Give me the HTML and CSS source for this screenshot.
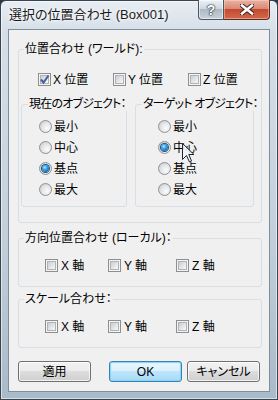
FILE: index.html
```html
<!DOCTYPE html>
<html lang="ja">
  <head>
    <meta charset="UTF-8" />
    <meta name="viewport" content="width=device-width, initial-scale=1.0" />
    <title>選択の位置合わせ</title>
    <link rel="stylesheet" href="styles.css">
  </head>
  <body>
    <div class="window">
      <div class="titlebar">
        <div class="title">選択の位置合わせ (Box001)</div>
        <div class="caption">
          <div class="capBtn help">?</div>
          <div class="capBtn close">
            <svg width="14" height="11" viewBox="0 0 14 11">
              <path d="M2 1.5 L12 9.5 M12 1.5 L2 9.5" stroke="#3a2018" stroke-width="4.5" stroke-linecap="square" fill="none" />
              <path d="M2 1.5 L12 9.5 M12 1.5 L2 9.5" stroke="#ffffff" stroke-width="2.6" stroke-linecap="square" fill="none" />
            </svg>
          </div>
        </div>
      </div>

      <div class="client">
        <fieldset class="group world">
          <legend>位置合わせ (ワールド):</legend>
          <div class="checkRow">
            <label class="check">
              <span class="box checked">
                <svg width="13" height="13" viewBox="0 0 13 13">
                  <path d="M3 6.5 L5.5 9.5 L10.5 2.5" stroke="#4a5f9a" stroke-width="2" fill="none" />
                </svg>
              </span>X 位置
            </label>
            <label class="check"><span class="box"></span>Y 位置</label>
            <label class="check"><span class="box"></span>Z 位置</label>
          </div>
          <div class="objRow">
            <fieldset class="group sub current">
              <legend>現在のオブジェクト：</legend>
              <div class="radios">
                <label class="radio"><span class="dot"></span>最小</label>
                <label class="radio"><span class="dot"></span>中心</label>
                <label class="radio"><span class="dot on"></span>基点</label>
                <label class="radio"><span class="dot"></span>最大</label>
              </div>
            </fieldset>
            <fieldset class="group sub target">
              <legend>ターゲット オブジェクト：</legend>
              <div class="radios">
                <label class="radio"><span class="dot"></span>最小</label>
                <label class="radio"><span class="dot on"></span>中心</label>
                <label class="radio"><span class="dot"></span>基点</label>
                <label class="radio"><span class="dot"></span>最大</label>
              </div>
            </fieldset>
          </div>
        </fieldset>

        <fieldset class="group orient">
          <legend>方向位置合わせ (ローカル)：</legend>
          <div class="axisRow">
            <label class="check"><span class="box"></span>X 軸</label>
            <label class="check"><span class="box"></span>Y 軸</label>
            <label class="check"><span class="box"></span>Z 軸</label>
          </div>
        </fieldset>

        <fieldset class="group scale">
          <legend>スケール合わせ：</legend>
          <div class="axisRow">
            <label class="check"><span class="box"></span>X 軸</label>
            <label class="check"><span class="box"></span>Y 軸</label>
            <label class="check"><span class="box"></span>Z 軸</label>
          </div>
        </fieldset>

        <div class="buttons">
          <div class="btn apply">適用</div>
          <div class="btn ok">OK</div>
          <div class="btn">キャンセル</div>
        </div>
      </div>

      <svg class="cursor" width="13" height="20" viewBox="0 0 13 20">
        <path d="M0.5 0.5 L0.5 16.5 L4.5 12.5 L7.5 19 L9.5 18 L6.8 11.5 L12 11.5 Z" fill="#f4f6f8" fill-opacity="0.85" stroke="#1c2630" stroke-width="1" />
      </svg>
    </div>
  </body>
</html>
```

FILE: styles.css
```css
body {
  margin: 0;
  background: #2c3844;
}
.window {
  position: relative;
  width: 278px;
  height: 400px;
  box-sizing: border-box;
  padding: 0 7px 7px 7px;
  display: flex;
  flex-direction: column;
  border: 1px solid #3a444f;
  border-radius: 6px 6px 0 0;
  background: linear-gradient(#e7edf3 0, #d6dfe8 30px, #c2cfdb 60%, #a9bac8 100%);
  box-shadow: inset 0 0 0 1px rgba(255, 255, 255, 0.55);
}
.titlebar {
  height: 28px;
  display: flex;
  justify-content: space-between;
  align-items: flex-start;
}
.title {
  padding: 6px 0 0 1px;
  font-family: "Liberation Sans", "Noto Sans CJK JP", sans-serif;
  font-feature-settings: "palt";
  font-size: 13px;
  line-height: 16px;
  color: #1a1a1a;
  text-shadow: 0 0 6px #ffffff, 0 0 3px #ffffff;
}
.caption {
  display: flex;
  margin-top: -1px;
}
.capBtn {
  height: 20px;
  box-sizing: border-box;
  display: flex;
  align-items: center;
  justify-content: center;
}
.help {
  width: 26px;
  border: 1px solid #4c5562;
  border-top: none;
  border-radius: 0 0 0 4px;
  background: linear-gradient(#eef2f6 0, #cfd7df 45%, #aeb9c5 50%, #c9d2db 100%);
  box-shadow: inset 0 0 0 1px rgba(255, 255, 255, 0.5);
  font-family: "Liberation Sans", sans-serif;
  font-weight: bold;
  font-size: 14px;
  color: #ffffff;
  text-shadow: 0 0 1px #1e2a36, 0 0 1px #1e2a36, 0 0 2px #1e2a36;
}
.close {
  width: 46px;
  border: 1px solid #5b2a22;
  border-top: none;
  border-left: none;
  border-radius: 0 0 4px 0;
  background: linear-gradient(#eab2a4 0, #d98a75 45%, #c34a30 50%, #d2694d 100%);
  box-shadow: inset 0 0 0 1px rgba(255, 220, 200, 0.45);
}
.client {
  flex: 1;
  background: #f0f0f0;
  border: 1px solid #7f8e9d;
  font-family: "Liberation Sans", "Noto Sans CJK JP", sans-serif;
  font-feature-settings: "palt";
  font-size: 12px;
  line-height: 14px;
  color: #000000;
}
.group {
  box-sizing: border-box;
  margin: 0 7px 0 9px;
  padding: 0;
  min-width: 0;
  border: 1px solid #d5dfe5;
  border-radius: 3px;
}
.group legend {
  margin-left: 5px;
  padding: 0 1px;
  line-height: 14px;
  white-space: nowrap;
}
.world {
  margin-top: 12px;
  padding-bottom: 15px;
}
.checkRow {
  display: grid;
  grid-template-columns: 75px 75px 75px;
  padding: 17px 0 0 19px;
}
.check {
  display: flex;
  align-items: center;
  height: 13px;
}
.box {
  position: relative;
  width: 13px;
  height: 13px;
  box-sizing: border-box;
  margin-right: 2px;
  border: 1px solid #8e8f8f;
  background: #f4f4f4;
}
.box::before {
  content: "";
  position: absolute;
  left: 1px;
  top: 1px;
  right: 1px;
  bottom: 1px;
  border: 1px solid #b0b4b8;
  background: linear-gradient(135deg, #c9cdd2 0, #e6e8ea 60%, #f8f8f8 100%);
}
.box svg {
  position: absolute;
  left: -1px;
  top: -1px;
}
.objRow {
  display: flex;
  gap: 8px;
  margin: 11px 7px 0 2px;
}
.sub {
  margin: 0;
  padding-bottom: 6px;
}
.sub legend {
  margin-left: 6px;
  letter-spacing: -0.8px;
}
.current {
  width: 106px;
}
.target {
  width: 119px;
}
.radios {
  padding-top: 5px;
}
.current .radios {
  padding-left: 17px;
}
.target .radios {
  padding-left: 22px;
}
.radio {
  display: flex;
  align-items: center;
  height: 21px;
}
.dot {
  position: relative;
  width: 13px;
  height: 13px;
  box-sizing: border-box;
  margin-right: 2px;
  border-radius: 50%;
  border: 1px solid #8d9296;
  background: radial-gradient(circle at 65% 65%, #fbfbfb 0, #e3e5e7 50%, #bfc3c7 100%);
}
.dot.on::after {
  content: "";
  position: absolute;
  left: 2px;
  top: 2px;
  width: 7px;
  height: 7px;
  border-radius: 50%;
  background: radial-gradient(circle at 40% 35%, #b8ecff 0, #3aa2e6 35%, #0d4f92 100%);
  box-shadow: 0 0 0 1px #1b4f84;
}
.orient {
  margin-top: 8px;
}
.scale {
  margin-top: 5px;
}
.axisRow {
  display: grid;
  grid-template-columns: 63px 68px auto;
  padding: 14px 0 14px 26px;
}
.axisRow .box {
  margin-right: 3px;
}
.buttons {
  display: flex;
  gap: 5px;
  margin: 13px 0 0 9px;
}
.btn {
  width: 73px;
  height: 21px;
  box-sizing: border-box;
  display: flex;
  align-items: center;
  justify-content: center;
  border: 1px solid #707070;
  border-radius: 3px;
  background: linear-gradient(#f2f2f2 0, #ebebeb 50%, #dddddd 50%, #cfcfcf 100%);
  box-shadow: inset 0 0 0 1px rgba(255, 255, 255, 0.75);
}
.apply {
  margin-right: 13px;
}
.ok {
  border-color: #3c7fb1;
  background: linear-gradient(#eaf6fd 0, #d9f0fc 50%, #bee6fd 50%, #a7d9f5 100%);
  box-shadow: inset 0 0 1px 1px #7fd6f8;
}
.cursor {
  position: absolute;
  left: 181px;
  top: 142px;
}
```
